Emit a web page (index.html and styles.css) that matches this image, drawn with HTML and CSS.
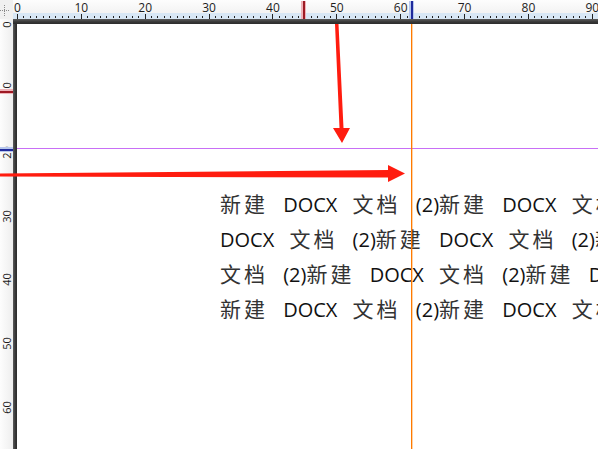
FILE: index.html
```html
<!DOCTYPE html>
<html lang="zh-CN">
<head>
    <meta charset="UTF-8">
    <meta name="viewport" content="width=device-width, initial-scale=1.0">
    <title>标尺与参考线</title>
    <link rel="stylesheet" href="styles.css">
</head>
<body>
    <div class="app">
        <!-- 左上角 -->
        <div class="corner">
            <svg width="13" height="19" viewBox="0 0 13 19">
                <line x1="0" y1="10.5" x2="10" y2="10.5" stroke="#8a8a8a" stroke-dasharray="1 1"/>
                <line x1="4.5" y1="5" x2="4.5" y2="16" stroke="#8a8a8a" stroke-dasharray="1 1"/>
            </svg>
        </div>

        <!-- 水平标尺 -->
        <div class="ruler-top">
            <div class="nums-h">
                <span>0</span><span>10</span><span>20</span><span>30</span><span>40</span>
                <span>50</span><span>60</span><span>70</span><span>80</span><span>90</span>
            </div>
            <div class="ticks-h"></div>
            <i class="mark-h mark-red"></i>
            <i class="mark-h mark-blue"></i>
        </div>
        <div class="frame-top"></div>

        <!-- 垂直标尺 -->
        <div class="ruler-left">
            <div class="nums-v">
                <span><b>0</b></span><span><b>10</b></span><span><b>20</b></span><span><b>30</b></span>
                <span><b>40</b></span><span><b>50</b></span><span><b>60</b></span><span><b>70</b></span>
            </div>
            <div class="ticks-v"></div>
            <i class="mark-v mark-red"></i>
            <i class="mark-v mark-blue"></i>
        </div>
        <div class="frame-left"></div>

        <!-- 页面 -->
        <div class="page">
            <div class="doc">
                <p><span class="zh">新建</span> DOCX <span class="zh">文档</span> (2)<span class="zh">新建</span> DOCX <span class="zh">文档</span> (2)<span class="zh">新建</span></p>
                <p>DOCX <span class="zh">文档</span> (2)<span class="zh">新建</span> DOCX <span class="zh">文档</span> (2)<span class="zh">新建</span></p>
                <p><span class="zh">文档</span> (2)<span class="zh">新建</span> DOCX <span class="zh">文档</span> (2)<span class="zh">新建</span> DOCX</p>
                <p><span class="zh">新建</span> DOCX <span class="zh">文档</span> (2)<span class="zh">新建</span> DOCX <span class="zh">文档</span> (2)</p>
            </div>
            <i class="guide guide-h"></i>
            <i class="guide guide-v"></i>
        </div>
    </div>

    <!-- 标注箭头 -->
    <svg class="arrows" width="598" height="449" viewBox="0 0 598 449">
        <polygon fill="#ff1c0f" points="335,24 338.5,24 343.5,128 350,128 342,143 333,128 339.5,128"/>
        <polygon fill="#ff1c0f" points="0,173.5 388,170 388,165 405,173.5 388,182 388,177.5 0,176.5"/>
    </svg>
</body>
</html>
```

FILE: styles.css
```css
*{
    padding: 0;
    margin: 0;
}
body{
    position: relative;
    width: 598px;
    height: 449px;
    overflow: hidden;
    background-color: #fff;
    font-family: "Open Sans", "Noto Sans CJK SC", sans-serif;
}
.app{
    display: grid;
    grid-template-columns: 13px 4px 1fr;
    grid-template-rows: 19px 5px 1fr;
    width: 598px;
    height: 449px;
}
.corner{
    grid-row: 1;
    grid-column: 1;
    background-color: #f0f0f0;
}
.corner svg{
    display: block;
}

/* 水平标尺 */
.ruler-top{
    position: relative;
    grid-row: 1;
    grid-column: 2 / 4;
    display: flex;
    flex-direction: column;
    overflow: hidden;
    background: linear-gradient(#fdfdfd, #eeeeee);
}
.nums-h{
    display: flex;
    height: 13px;
    margin-left: -27.43px;
    font-size: 12px;
    line-height: 15px;
    color: #1d1d1d;
}
.nums-h > span{
    flex: 0 0 63.86px;
    text-align: center;
}
.ticks-h{
    flex: 1;
    background:
        repeating-linear-gradient(to right, #222 0 1px, transparent 1px 63.86px) 4px 1px / 100% 5px no-repeat,
        repeating-linear-gradient(to right, #222 0 1px, transparent 1px 6.386px) 4px 3px / 100% 2px no-repeat,
        #d8e7f5;
}
.mark-h{
    position: absolute;
    top: 1px;
    bottom: 0;
    width: 5px;
}
.mark-h::after{
    content: "";
    position: absolute;
    top: 0;
    bottom: 0;
    left: 2px;
    width: 1.5px;
}
.mark-h.mark-red{
    left: 288px;
    background-color: #eeb3b8;
}
.mark-h.mark-red::after{
    background-color: #9e1a24;
}
.mark-h.mark-blue{
    left: 396px;
    background-color: #b7c7ec;
}
.mark-h.mark-blue::after{
    background-color: #1f2a9c;
}

.frame-top{
    grid-row: 2;
    grid-column: 2 / 4;
    background: linear-gradient(#5c5c5c, #363636 60%, #2c2c2c);
}

/* 垂直标尺 */
.ruler-left{
    position: relative;
    grid-row: 2 / 4;
    grid-column: 1;
    display: flex;
    overflow: hidden;
    background: linear-gradient(to right, #fdfdfd, #eeeeee);
}
.nums-v{
    display: flex;
    flex-direction: column;
    flex: 0 0 9px;
    margin-top: -26.43px;
    font-size: 11px;
    color: #1d1d1d;
}
.nums-v > span{
    display: flex;
    flex: 0 0 63.86px;
    align-items: center;
    justify-content: center;
}
.nums-v b{
    font-weight: normal;
    line-height: 9px;
    transform: rotate(-90deg);
}
.ticks-v{
    flex: 1;
    background:
        repeating-linear-gradient(to bottom, #222 0 1px, transparent 1px 63.86px) 0 5px / 100% 100% no-repeat,
        repeating-linear-gradient(to bottom, #222 0 1px, transparent 1px 6.386px) 2px 5px / 2px 100% no-repeat,
        #d8e7f5;
}
.mark-v{
    position: absolute;
    left: 0;
    right: 0;
    height: 5px;
}
.mark-v::after{
    content: "";
    position: absolute;
    left: 0;
    right: 0;
    top: 2px;
    height: 1.5px;
}
.mark-v.mark-red{
    top: 70px;
    background-color: #eeb3b8;
}
.mark-v.mark-red::after{
    background-color: #9e1a24;
}
.mark-v.mark-blue{
    top: 128px;
    background-color: #b7c7ec;
}
.mark-v.mark-blue::after{
    background-color: #1f2a9c;
}

.frame-left{
    grid-row: 3;
    grid-column: 2;
    background: linear-gradient(to right, #5c5c5c, #363636 60%, #2c2c2c);
}

/* 页面 */
.page{
    position: relative;
    grid-row: 3;
    grid-column: 3;
    overflow: hidden;
    background-color: #fff;
}
.doc{
    padding: 163px 0 0 203px;
    font-size: 20px;
    line-height: 35px;
    word-spacing: 10px;
    color: #111;
}
.doc > p{
    white-space: nowrap;
}
.doc .zh{
    font-size: 21px;
    letter-spacing: 3px;
    word-spacing: 0;
    color: #333;
}
.guide{
    position: absolute;
    display: block;
}
.guide-h{
    top: 124px;
    left: 0;
    right: 0;
    border-top: 1px solid #c86ff6;
}
.guide-v{
    top: 0;
    bottom: 0;
    left: 394px;
    width: 2px;
    background: linear-gradient(to right, #ff7a00 0 1px, rgba(255, 128, 0, 0.35) 1px 2px);
}

.arrows{
    position: absolute;
    top: 0;
    left: 0;
    pointer-events: none;
}
```
